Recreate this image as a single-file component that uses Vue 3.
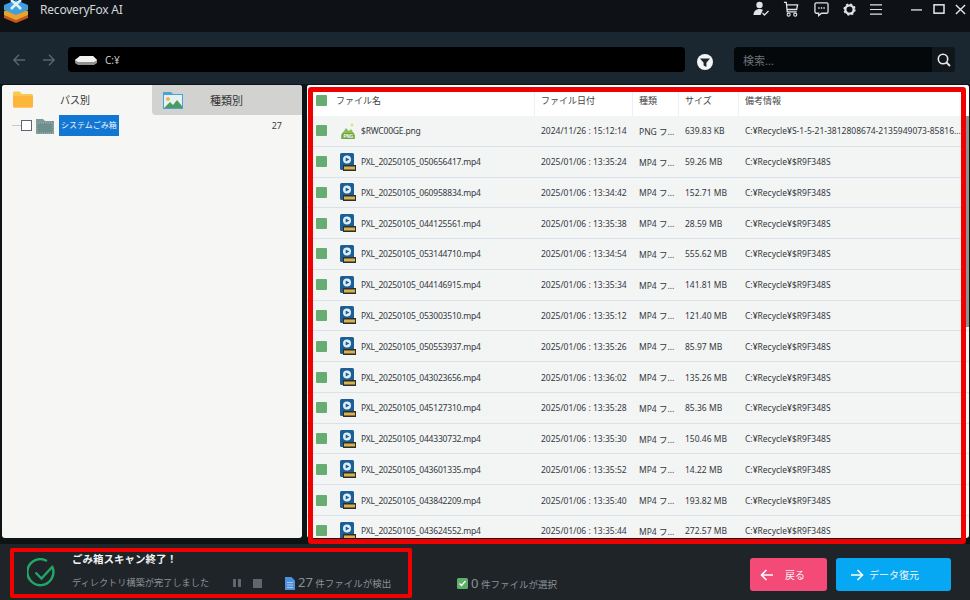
<script setup>
const rows = [
  ['$RWC00GE.png', '2024/11/26 : 15:12:14', 'PNG フ...', '639.83 KB', 'C:¥Recycle¥S-1-5-21-3812808674-2135949073-85816...', 'png'],
  ['PXL_20250105_050656417.mp4', '2025/01/06 : 13:35:24', 'MP4 フ...', '59.26 MB'],
  ['PXL_20250105_060958834.mp4', '2025/01/06 : 13:34:42', 'MP4 フ...', '152.71 MB'],
  ['PXL_20250105_044125561.mp4', '2025/01/06 : 13:35:38', 'MP4 フ...', '28.59 MB'],
  ['PXL_20250105_053144710.mp4', '2025/01/06 : 13:34:54', 'MP4 フ...', '555.62 MB'],
  ['PXL_20250105_044146915.mp4', '2025/01/06 : 13:35:34', 'MP4 フ...', '141.81 MB'],
  ['PXL_20250105_053003510.mp4', '2025/01/06 : 13:35:12', 'MP4 フ...', '121.40 MB'],
  ['PXL_20250105_050553937.mp4', '2025/01/06 : 13:35:26', 'MP4 フ...', '85.97 MB'],
  ['PXL_20250105_043023656.mp4', '2025/01/06 : 13:36:02', 'MP4 フ...', '135.26 MB'],
  ['PXL_20250105_045127310.mp4', '2025/01/06 : 13:35:28', 'MP4 フ...', '85.36 MB'],
  ['PXL_20250105_044330732.mp4', '2025/01/06 : 13:35:30', 'MP4 フ...', '150.46 MB'],
  ['PXL_20250105_043601335.mp4', '2025/01/06 : 13:35:52', 'MP4 フ...', '14.22 MB'],
  ['PXL_20250105_043842209.mp4', '2025/01/06 : 13:35:40', 'MP4 フ...', '193.82 MB'],
  ['PXL_20250105_043624552.mp4', '2025/01/06 : 13:35:44', 'MP4 フ...', '272.57 MB'],
].map(r => ({ name: r[0], date: r[1], type: r[2], size: r[3], info: r[4] || 'C:¥Recycle¥$R9F348S', png: r[5] === 'png' }))
</script>

<template>
  <div class="app">
    <header class="titlebar">
      <svg class="logo" width="26" height="24" viewBox="0 0 26 24">
        <path d="M13 11 L25 16 V19 L13 24 L1 19 V16Z" fill="#c2561f"/>
        <path d="M13 7 L25 12 V16 L13 21 L1 16 V12Z" fill="#e9a32c"/>
        <path d="M13 1 L25 6 V11 L13 16 L1 11 V6Z" fill="#3f9ede"/>
        <path d="M8 1 L13 5 L18 1 M8 10 L13 5 L18 10" fill="none" stroke="#dff1fb" stroke-width="2.6"/>
      </svg>
      <span class="brand">RecoveryFox AI</span>
      <div class="tools">
        <svg width="17" height="16" viewBox="0 0 16 16"><circle cx="6" cy="4" r="3.2" fill="#dfe3e6"/><path d="M0 14c0-4 3-6 6-6 1.500 0 2.500.4 3.400 1L7 14Z" fill="#dfe3e6"/><path d="M9 12l2 2 4-4" fill="none" stroke="#dfe3e6" stroke-width="1.300"/></svg>
        <svg width="16" height="17" viewBox="0 0 17 17" class="ic-cart"><path d="M1 1h2.500l1 10h10M4 3.500h11.500l-1 5H4.500" fill="none" stroke="#dfe3e6" stroke-width="1.400"/><circle cx="6" cy="14" r="1.600" fill="none" stroke="#dfe3e6" stroke-width="1.200"/><circle cx="13" cy="14" r="1.600" fill="none" stroke="#dfe3e6" stroke-width="1.200"/></svg>
        <svg width="15" height="16" viewBox="0 0 16 16" class="ic-chat"><path d="M2.500 1.500h11a1.500 1.500 0 0 1 1.500 1.500v8a1.500 1.500 0 0 1-1.500 1.500H8l-3 2.500v-2.500H2.500A1.500 1.500 0 0 1 1 11V3a1.500 1.500 0 0 1 1.500-1.500Z" fill="none" stroke="#dfe3e6" stroke-width="1.400"/><path d="M4.500 7h1.500M7.300 7h1.500M10 7h1.500" stroke="#dfe3e6" stroke-width="1.600"/></svg>
        <svg width="13" height="15" viewBox="0 0 15 15" class="ic-gear"><circle cx="7.500" cy="7.500" r="4.800" fill="none" stroke="#dfe3e6" stroke-width="2.600"/><circle cx="7.500" cy="7.500" r="6.300" fill="none" stroke="#dfe3e6" stroke-width="1.600" stroke-dasharray="2.500 2.450"/></svg>
        <svg width="12" height="13" viewBox="0 0 13 13" class="ic-menu"><path d="M0 1.500h13M0 6.500h13M0 11.500h13" stroke="#dfe3e6" stroke-width="1.300"/></svg>
        <svg width="11" height="13" viewBox="0 0 13 13" class="ic-min"><path d="M0 7h13" stroke="#e6e9eb" stroke-width="1.500"/></svg>
        <svg width="12" height="10" viewBox="0 0 14 12" class="ic-max"><rect x="1" y="1" width="12" height="10" fill="none" stroke="#e6e9eb" stroke-width="1.800"/></svg>
        <svg width="11" height="11" viewBox="0 0 12 12" class="ic-close"><path d="M1 1l10 10M11 1L1 11" stroke="#e6e9eb" stroke-width="1.500"/></svg>
      </div>
    </header>

    <div class="toolbar">
      <svg width="14" height="14" viewBox="0 0 15 14"><path d="M14 7H2M7.500 1.500 2 7l5.500 5.500" fill="none" stroke="#5a656d" stroke-width="1.500"/></svg>
      <svg class="nav2" width="14" height="14" viewBox="0 0 15 14"><path d="M1 7h12M7.500 1.500 13 7l-5.500 5.500" fill="none" stroke="#5a656d" stroke-width="1.500"/></svg>
      <div class="pathbox">
        <svg width="24" height="12" viewBox="0 0 24 12"><path d="M1 6 6 2h13l4 4v3l-3 2H4L1 9Z" fill="#8f918f"/><path d="M1 6 6 2h13l4 4-3 2H4Z" fill="#f2f2f0"/></svg>
        <span>C:¥</span>
      </div>
      <svg class="filter" width="16" height="16" viewBox="0 0 16 16"><circle cx="8" cy="8" r="8" fill="#f4f5f5"/><path d="M3 4.500h10L9.400 8.800V13L6.600 11.500V8.800Z" fill="#1c2730"/></svg>
      <div class="search">
        <span class="ph">検索...</span>
        <div class="search-btn"><svg width="14" height="14" viewBox="0 0 14 14"><circle cx="6" cy="6" r="4.700" fill="none" stroke="#e8eaec" stroke-width="1.600"/><path d="M9.500 9.500 13 13" stroke="#e8eaec" stroke-width="1.800"/></svg></div>
      </div>
    </div>

    <main class="main">
      <section class="left">
        <div class="tabs">
          <div class="tab active">
            <svg width="20" height="17" viewBox="0 0 20 17"><path d="M0 2a1.500 1.500 0 0 1 1.500-1.500h5L9 3h9.500A1.500 1.500 0 0 1 20 4.500V15a1.500 1.500 0 0 1-1.500 1.500h-17A1.500 1.500 0 0 1 0 15Z" fill="#fbc94f"/><path d="M0 5h20v10a1.500 1.500 0 0 1-1.500 1.500h-17A1.500 1.500 0 0 1 0 15Z" fill="#fdb53c"/></svg>
            <span>パス別</span>
          </div>
          <div class="tab">
            <svg width="20" height="18" viewBox="0 0 20 18"><path d="M0 1h8l2 2h10v15H0Z" fill="#4aa3d8"/><rect x="1" y="4" width="18" height="13" fill="#e5f2f4"/><circle cx="5" cy="8" r="2" fill="#f3b548"/><path d="M1 17l6-6 3 3 4-5 5 6v2Z" fill="#4c9a63"/></svg>
            <span>種類別</span>
          </div>
        </div>
        <div class="tree">
          <span class="dash"></span>
          <span class="cb"></span>
          <svg width="18" height="16" viewBox="0 0 18 16"><path d="M0 1h7l2 2h9v13H0Z" fill="#7b9a99"/><path d="M1 5h16v10H1Z" fill="#6f8f8c" stroke="#9db1b0" stroke-dasharray="1 1"/></svg>
          <span class="node">システムごみ箱</span>
          <span class="count">27</span>
        </div>
      </section>

      <section class="right">
        <div class="table">
          <div class="thead row-grid">
            <span class="sq"></span>
            <span class="th first">ファイル名</span>
            <span class="th">ファイル日付</span>
            <span class="th">種類</span>
            <span class="th">サイズ</span>
            <span class="th">備考情報</span>
          </div>
          <div v-for="r in rows" :key="r.name" class="row row-grid">
            <span class="sq"></span>
            <span class="name">
              <svg v-if="r.png" width="16" height="18" viewBox="0 0 16 18"><circle cx="12" cy="3" r="1.500" fill="#f0d98a"/><path d="M1 13l5-7 3 3 2-2 4 6v4H1Z" fill="#8fbc5a"/><rect x="2" y="11" width="12" height="6" rx="1" fill="#6fa544"/><text x="3.500" y="16" font-size="4.500" fill="#fff" font-family="Liberation Sans" font-weight="700">PNG</text></svg>
              <svg v-else width="16" height="18" viewBox="0 0 16 18"><rect x="0" y="0" width="14" height="17" rx="1.500" fill="#1c5f94"/><circle cx="7" cy="6.500" r="4" fill="#dfeef8"/><path d="M5.700 4.500 9.500 6.500 5.700 8.500Z" fill="#1c5f94"/><rect x="3" y="12" width="13" height="6" fill="#2b2f33"/><rect x="4" y="13.500" width="11" height="3" fill="#d8b24a"/></svg>
              <span class="fname">{{ r.name }}</span>
            </span>
            <span class="cell">{{ r.date }}</span>
            <span class="cell">{{ r.type }}</span>
            <span class="cell">{{ r.size }}</span>
            <span class="cell">{{ r.info }}</span>
          </div>
          <span class="scrollbar"></span>
        </div>
        <span class="frame"></span>
      </section>
    </main>

    <footer class="footer">
      <div class="status">
        <svg width="30" height="30" viewBox="0 0 30 30"><path d="M25.500 9.500A13 13 0 1 1 20 3" fill="none" stroke="#1fa866" stroke-width="2.400"/><path d="M8.500 14.500l6 6L26 8" fill="none" stroke="#1fa866" stroke-width="2.400"/></svg>
        <div class="status-text">
          <div class="status-title">ごみ箱スキャン終了！</div>
          <div class="status-sub">
            <span class="dir">ディレクトリ構築が完了しました</span>
            <span class="pause"><i></i><i></i></span>
            <span class="stop"></span>
            <svg width="10" height="13" viewBox="0 0 10 13"><path d="M0 0h6.500L10 3.500V13H0Z" fill="#4f8fe0"/><path d="M2 5.500h6M2 8h6M2 10.500h6" stroke="#bcd6f5" stroke-width=".8"/></svg>
            <span class="found"><b>27</b> 件ファイルが検出</span>
          </div>
        </div>
      </div>
      <div class="selected">
        <svg width="11" height="11" viewBox="0 0 11 11"><rect width="11" height="11" rx="1.500" fill="#5fae6a"/><path d="M2.500 5.500l2 2 4-4.500" fill="none" stroke="#fff" stroke-width="1.400"/></svg>
        <span><b>0</b> 件ファイルが選択</span>
      </div>
      <button class="btn back">
        <svg width="14" height="12" viewBox="0 0 14 12"><path d="M13 6H2M6.500 1 1.500 6l5 5" fill="none" stroke="#fff" stroke-width="1.600"/></svg>
        <span>戻る</span>
      </button>
      <button class="btn next">
        <svg width="14" height="12" viewBox="0 0 14 12"><path d="M1 6h11M7.500 1l5 5-5 5" fill="none" stroke="#fff" stroke-width="1.600"/></svg>
        <span>データ復元</span>
      </button>
    </footer>
  </div>
</template>

<style scoped>
.app {
  width: 970px;
  height: 600px;
  overflow: hidden;
  display: flex;
  flex-direction: column;
  background: #1f2429;
  font-family: "Noto Sans", "Noto Sans CJK JP", sans-serif;
  color: #3a3f44;
}
.titlebar {
  height: 32px;
  flex: none;
  display: flex;
  align-items: flex-start;
  background: #0e1217;
  padding-left: 3px;
}
.logo { margin-top: -1px; }
.brand {
  margin-left: 11px;
  margin-top: 1px;
  font-size: 12px;
  line-height: 18px;
  letter-spacing: -0.2px;
  color: #d3d6d9;
}
.tools {
  margin-left: auto;
  display: flex;
  align-items: center;
  height: 18px;
  padding-right: 4px;
}
.ic-cart { margin-left: 13px; }
.ic-chat { margin-left: 15px; }
.ic-gear { margin-left: 14px; }
.ic-menu { margin-left: 14px; }
.ic-min { margin-left: 29px; }
.ic-max { margin-left: 11px; }
.ic-close { margin-left: 10px; }

.toolbar {
  height: 52px;
  flex: none;
  display: flex;
  align-items: center;
  box-sizing: border-box;
  background: #1b2730;
  padding-left: 12px;
  padding-top: 3px;
}
.nav2 { margin-left: 16px; }
.pathbox {
  margin-left: 12px;
  width: 617px;
  height: 25px;
  background: #000;
  border-radius: 4px;
  display: flex;
  align-items: center;
  padding-left: 6px;
  font-size: 10px;
  color: #c9cdd0;
  box-sizing: border-box;
}
.pathbox span { margin-left: 7px; }
.filter { margin-left: 12px; margin-top: 4px; }
.search {
  margin-left: 21px;
  width: 221px;
  height: 25px;
  background: #05080a;
  border-radius: 4px;
  display: flex;
  align-items: center;
  justify-content: space-between;
  padding-left: 9px;
  box-sizing: border-box;
  font-size: 11px;
  color: #6d7479;
}
.search-btn {
  width: 23px;
  height: 25px;
  background: #11161a;
  border-radius: 0 4px 4px 0;
  display: flex;
  align-items: center;
  justify-content: center;
}

.main {
  height: 460px;
  flex: none;
  display: flex;
  align-items: flex-start;
  background: #0e1316;
}
.left {
  margin: 1px 0 0 2px;
  width: 300px;
  height: 453px;
  background: #f6f6f5;
  border-radius: 3px;
  overflow: hidden;
}
.tabs { display: flex; height: 30px; }
.tab {
  flex: 1;
  display: flex;
  align-items: center;
  background: #d2d2d1;
  font-size: 11px;
  color: #333;
  padding-left: 11px;
  gap: 27px;
  border-bottom-left-radius: 4px;
}
.tab.active {
  flex: none;
  width: 150px;
  background: #f6f6f5;
  font-size: 10px;
  padding-bottom: 2px;
  box-sizing: border-box;
  border-radius: 0;
}
.tree {
  display: flex;
  align-items: center;
  height: 21px;
  padding-left: 10px;
  font-size: 9px;
}
.dash { width: 9px; border-top: 1px solid #c9c9c9; }
.cb {
  width: 9px;
  height: 9px;
  border: 1px solid #5b6478;
  background: #fff;
  margin-right: 4px;
}
.node {
  margin-left: 5px;
  width: 60px;
  height: 21px;
  line-height: 20px;
  font-size: 8px;
  background: #1277d3;
  color: #e9f3fb;
  white-space: nowrap;
  text-align: center;
}
.count { margin-left: auto; margin-right: 20px; }

.right {
  position: relative;
  margin: 1px 0 0 5px;
  width: 662px;
  height: 453px;
}
.table {
  position: relative;
  height: 453px;
  overflow: hidden;
  background: #f3f4f4;
  border-radius: 3px;
}
.frame {
  position: absolute;
  left: 1px;
  top: 2px;
  width: 658px;
  height: 457px;
  box-sizing: border-box;
  border: 5px solid #f10000;
  border-radius: 3px;
}
.row-grid {
  display: grid;
  grid-template-columns: 29px 198px 98px 46px 60px 1fr;
  align-items: center;
}
.thead {
  height: 31px;
  background: #fff;
  font-size: 9px;
  color: #444;
}
.th {
  height: 24px;
  margin-top: 7px;
  line-height: 18px;
  padding-left: 6px;
  border-left: 1px solid #edf0f3;
  white-space: nowrap;
  box-sizing: border-box;
}
.th.first { border-left: 0; padding-left: 0; }
.sq {
  width: 11px;
  height: 11px;
  background: #67ad72;
  margin-left: 9px;
  border-radius: 1px;
}
.row {
  height: 30.77px;
  box-sizing: border-box;
  border-bottom: 1px solid #d9e1ea;
  font-size: 8.500px;
  color: #34393d;
}
.name { display: flex; align-items: center; gap: 5px; margin-left: 4px; white-space: nowrap; }
.fname { letter-spacing: -0.2px; }
.cell { padding-left: 7px; white-space: nowrap; }
.scrollbar {
  position: absolute;
  top: 31px;
  left: 659px;
  width: 3px;
  height: 211px;
  background: #8f9295;
}

.footer {
  flex: 1;
  display: flex;
  align-items: flex-start;
  background: #1f2429;
}
.status {
  margin: 4px 0 0 10px;
  width: 402px;
  height: 50px;
  box-sizing: border-box;
  border: 4px solid #f10000;
  border-radius: 2px;
  display: flex;
  align-items: center;
  padding-left: 13px;
  color: #8b9196;
}
.status-text { margin-left: 15px; margin-top: -3px; }
.status-title {
  font-size: 10.500px;
  line-height: 14px;
  font-weight: 700;
  color: #f1f2f3;
}
.status-sub {
  margin-top: 9px;
  display: flex;
  align-items: center;
  font-size: 9.200px;
  line-height: 14px;
  white-space: nowrap;
}
.dir { width: 161px; }
.pause { display: flex; gap: 2px; }
.pause i { width: 3px; height: 8px; background: #5f666c; }
.stop { width: 9px; height: 9px; background: #5f666c; margin-left: 12px; margin-right: 23px; }
.found { margin-left: 3px; font-size: 9.500px; }
.found b { font-weight: 400; font-size: 13px; }
.selected {
  margin: 30px 0 0 45px;
  display: flex;
  align-items: center;
  gap: 3px;
  font-size: 9.500px;
  color: #8b9196;
  width: 293px;
  white-space: nowrap;
}
.selected b { font-weight: 400; font-size: 13px; }
.btn {
  margin-top: 14px;
  height: 33px;
  border: 0;
  border-radius: 3px;
  display: flex;
  align-items: center;
  font-family: inherit;
  font-size: 10px;
  color: #f4f4f4;
  padding: 0 0 0 10px;
}
.back { width: 77px; background: #f44a78; gap: 11px; }
.next { width: 115px; margin-left: 9px; background: #06a8f4; gap: 5px; padding-left: 14px; }
</style>
